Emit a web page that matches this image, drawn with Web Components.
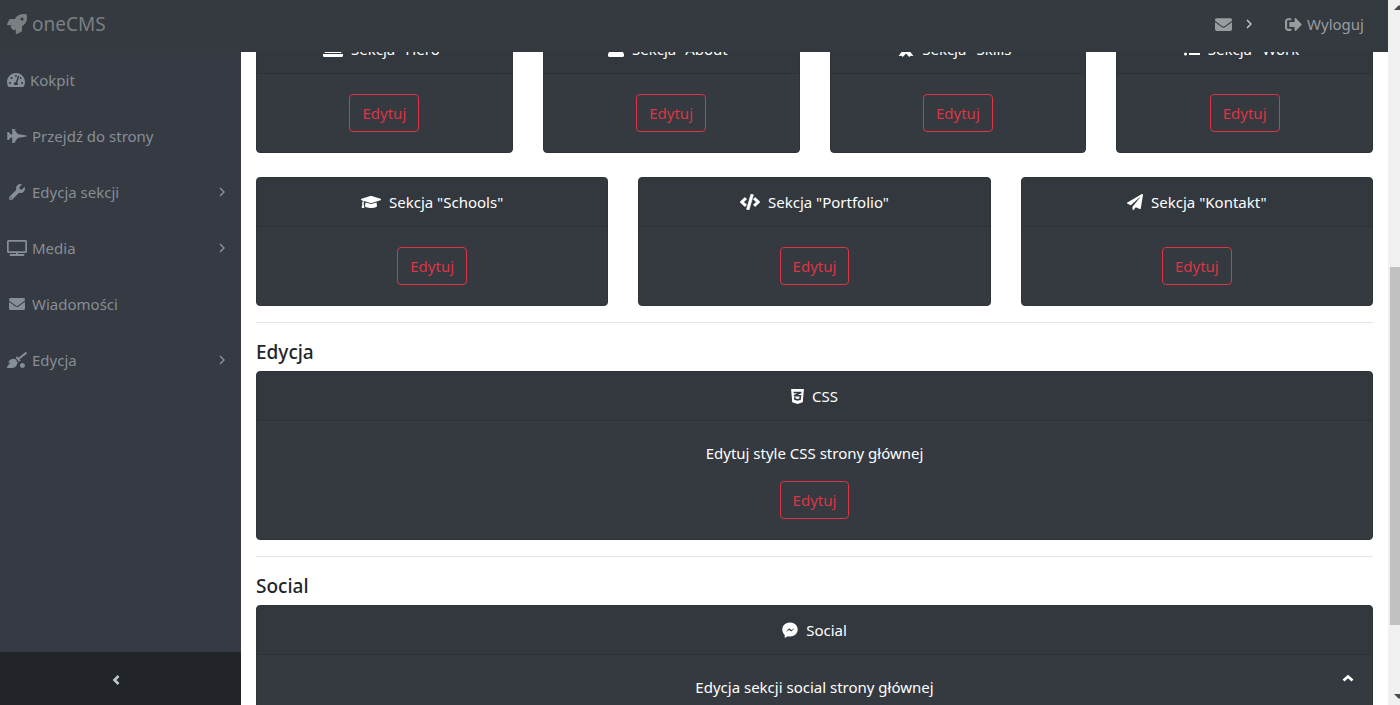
<!DOCTYPE html>
<html lang="pl">
<head>
<meta charset="utf-8">
<title>oneCMS</title>
<style>
  html, body { height: 100%; margin: 0; }
  body { overflow: hidden; background: #fff; color: #212529; font: 15px/24px "Noto Sans", "Open Sans", sans-serif; }
</style>
</head>
<body>
<cms-app>
  <cms-navbar slot="navbar"></cms-navbar>
  <cms-sidebar slot="sidebar">
    <cms-nav-item icon="gauge">Kokpit</cms-nav-item>
    <cms-nav-item icon="jet">Przejdź do strony</cms-nav-item>
    <cms-nav-item icon="wrench" more>Edycja sekcji</cms-nav-item>
    <cms-nav-item icon="screen" more>Media</cms-nav-item>
    <cms-nav-item icon="envelope">Wiadomości</cms-nav-item>
    <cms-nav-item icon="broom" more>Edycja</cms-nav-item>
  </cms-sidebar>
  <cms-row columns="4">
    <cms-card editable icon="hero" heading='Sekcja "Hero"'></cms-card>
    <cms-card editable icon="user" heading='Sekcja "About"'></cms-card>
    <cms-card editable icon="award" heading='Sekcja "Skills"'></cms-card>
    <cms-card editable icon="list" heading='Sekcja "Work"'></cms-card>
  </cms-row>
  <cms-row columns="3">
    <cms-card editable icon="cap" heading='Sekcja "Schools"'></cms-card>
    <cms-card editable icon="code" heading='Sekcja "Portfolio"'></cms-card>
    <cms-card editable icon="plane" heading='Sekcja "Kontakt"'></cms-card>
  </cms-row>
  <cms-section heading="Edycja">
    <cms-card editable icon="css" heading="CSS"><p>Edytuj style CSS strony głównej</p></cms-card>
  </cms-section>
  <cms-section heading="Social">
    <cms-card icon="messenger" heading="Social"><p>Edycja sekcji social strony głównej</p></cms-card>
  </cms-section>
</cms-app>

<script>
// name: [viewBox width, viewBox height, markup]
const ICONS = {
  rocket: [512, 512, '<path d="M505.12 19.09c-1.19-5.53-6.66-11-12.21-12.19C460.72 0 435.51 0 410.41 0 307.18 0 245.27 55.2 199.05 128H94.84c-16.35.02-35.56 11.88-42.89 26.48L2.52 253.3A28.4 28.4 0 0 0 0 264a24 24 0 0 0 24 24h103.82l-22.48 22.47c-11.36 11.36-13 32.26 0 45.25l50.91 50.91c11.15 11.18 32.15 13.15 45.27 0L224 384.16V488a24 24 0 0 0 24 24 28.56 28.56 0 0 0 10.71-2.52l98.73-49.39c14.63-7.3 26.5-26.5 26.5-42.86V312.8C456.54 266.48 512 204.39 512 101.7c.08-25.2.08-50.4-6.88-82.61ZM384 168a40 40 0 1 1 40-40 40 40 0 0 1-40 40Z"/>'],
  envelope: [512, 512, '<path d="M502.3 190.8c3.9-3.1 9.7-.2 9.7 4.7V400c0 26.5-21.5 48-48 48H48c-26.5 0-48-21.5-48-48V195.6c0-5 5.7-7.8 9.7-4.7 22.4 17.4 52.1 39.5 154.1 113.6 21.1 15.4 56.7 47.8 92.2 47.6 35.7.3 72-32.8 92.3-47.6 102-74.1 131.6-96.3 154-113.7zM256 320c23.2.4 56.6-29.2 73.4-41.4 132.7-96.3 142.8-104.7 173.4-128.7 5.8-4.5 9.2-11.5 9.2-18.9v-19c0-26.5-21.5-48-48-48H48c-26.5 0-48 21.5-48 48v19c0 7.4 3.4 14.3 9.2 18.9 30.6 23.9 40.7 32.4 173.4 128.7 16.8 12.2 50.2 41.8 73.4 41.4z"/>'],
  logout: [512, 512, '<path d="M497 273L329 441c-15 15-41 4.5-41-17v-96H152c-13.3 0-24-10.7-24-24v-96c0-13.3 10.7-24 24-24h136V88c0-21.4 25.9-32 41-17l168 168c9.3 9.4 9.3 24.6 0 34zM192 436v-40c0-6.6-5.4-12-12-12H96c-17.7 0-32-14.3-32-32V160c0-17.7 14.3-32 32-32h84c6.6 0 12-5.4 12-12V76c0-6.6-5.4-12-12-12H96c-53 0-96 43-96 96v192c0 53 43 96 96 96h84c6.6 0 12-5.4 12-12z"/>'],
  gauge: [576, 512, '<path d="M288 32C128.94 32 0 160.94 0 320c0 52.8 14.25 102.26 39.06 144.8 5.61 9.62 16.3 15.2 27.44 15.2h443c11.14 0 21.83-5.58 27.44-15.2C561.75 422.26 576 372.8 576 320c0-159.06-128.94-288-288-288zm0 64c14.71 0 26.58 10.13 30.32 23.65-1.11 2.26-2.64 4.23-3.45 6.67l-9.22 27.67c-5.13 3.49-10.97 6.01-17.64 6.01-17.67 0-32-14.33-32-32S270.33 96 288 96zM96 384c-17.67 0-32-14.33-32-32s14.33-32 32-32 32 14.33 32 32-14.33 32-32 32zm48-160c-17.67 0-32-14.33-32-32s14.33-32 32-32 32 14.33 32 32-14.33 32-32 32zm246.77-72.41l-61.33 184C343.13 347.33 352 364.54 352 384c0 11.72-3.38 22.55-8.88 32H232.88c-5.5-9.45-8.88-20.28-8.88-32 0-33.94 26.5-61.43 59.9-63.59l61.34-184.01c4.17-12.56 17.73-19.45 30.36-15.17 12.57 4.19 19.35 17.79 15.17 30.36zm14.66 57.2l15.52-46.55c3.47-1.29 7.13-2.23 11.05-2.23 17.67 0 32 14.33 32 32s-14.33 32-32 32c-11.38-.01-20.89-6.28-26.57-15.22zM480 384c-17.67 0-32-14.33-32-32s14.33-32 32-32 32 14.33 32 32-14.33 32-32 32z"/>'],
  jet: [640, 512, '<path d="M544 224l-128-16-48-16h-24L227.158 44h39.509C278.333 44 288 41.375 288 38s-9.667-6-21.333-6H152v12h16v164h-48l-66.667-80H18.667L8 138.667V208h8v16h48v2.666l-64 8v42.667l64 8V288H16v16H8v69.333L18.667 384h34.667L120 304h48v164h-16v12h114.667c11.667 0 21.333-2.625 21.333-6s-9.667-6-21.333-6h-39.509L344 320h24l48-16 128-16c96-21.333 96-26.583 96-32 0-5.417 0-10.667-96-32z"/>'],
  wrench: [512, 512, '<path d="M507.73 109.1c-2.24-9.03-13.54-12.09-20.12-5.51l-74.36 74.36-67.88-11.31-11.31-67.88 74.36-74.36c6.62-6.62 3.43-17.9-5.66-20.16-47.38-11.74-99.55.91-136.58 37.93-39.64 39.64-50.55 97.1-34.05 147.2L18.74 402.76c-24.99 24.99-24.99 65.51 0 90.5 24.99 24.99 65.51 24.99 90.5 0l213.21-213.21c50.12 16.71 107.47 5.68 147.37-34.22 37.07-37.07 49.7-89.32 37.91-136.73zM64 472c-13.25 0-24-10.75-24-24 0-13.26 10.75-24 24-24s24 10.74 24 24c0 13.25-10.75 24-24 24z"/>'],
  screen: [20, 16, '<path fill-rule="evenodd" d="M1.5 0h17A1.5 1.5 0 0 1 20 1.5v10a1.5 1.5 0 0 1-1.5 1.5h-17A1.5 1.5 0 0 1 0 11.5v-10A1.5 1.5 0 0 1 1.5 0zM1.7 1.7v9.600h16.600V1.700zM9 13h2v1h5.500a.8.8 0 0 1 0 2h-13a.8.8 0 0 1 0-2H9z"/>'],
  broom: [640, 512, '<path d="M256.5 216.8L343.2 326s-16.6 102.4-76.6 150.1C206.7 523.8 0 510.2 0 510.2s3.8-23.1 11-55.4l94.6-112.2c4-4.7-.9-11.6-6.6-9.5l-60.4 22.1c14.4-41.7 32.7-80 54.6-97.5 59.9-47.8 163.3-40.9 163.3-40.9zm238 135c-44 0-79.8 35.8-79.8 79.9 0 44.1 35.7 79.9 79.8 79.9 44.1 0 79.8-35.8 79.8-79.9 0-44.2-35.8-79.9-79.8-79.9zM636.5 31L616.7 6c-5.5-6.9-15.5-8-22.4-2.6L361.8 181.3l-34.1-43c-5.1-6.4-15.1-5.2-18.6 2.2l-25.3 54.6 86.7 109.2 58.8-12.4c8-1.7 11.4-11.2 6.3-17.6l-34.1-42.9L634 53.5c6.9-5.5 8-15.6 2.5-22.5z"/>'],
  hero: [20, 16, '<path d="M3 1h14v9H3zM2 10.500h16l.5 1.500H1.500zM0 13h20v1.500a1.500 1.500 0 0 1-1.500 1.500h-17A1.500 1.500 0 0 1 0 14.500z"/>'],
  user: [512, 512, '<path d="M256 288c79.5 0 144-64.5 144-144S335.5 0 256 0 112 64.5 112 144s64.5 144 144 144zm128 32h-55.1c-22.2 10.2-46.9 16-72.9 16s-50.6-5.8-72.9-16H128C57.3 320 0 377.3 0 448v16c0 26.5 21.5 48 48 48h416c26.5 0 48-21.5 48-48v-16c0-70.7-57.3-128-128-128z"/>'],
  award: [16, 16, '<path d="M8 0a5.500 5.500 0 0 1 5.500 5.500c0 1.800-.8 3.300-2 4.400L15.500 15l-2.800-.3-1.500 1.300L8 12.500 4.800 16l-1.500-1.300-2.800.3 4-5.100a5.500 5.500 0 0 1-2-4.400A5.500 5.500 0 0 1 8 0z"/>'],
  list: [16, 16, '<circle cx="1.5" cy="3" r="1.5"/><circle cx="1.5" cy="8" r="1.5"/><circle cx="1.5" cy="13" r="1.5"/><path d="M5 2h11v2H5zM5 7h11v2H5zM5 12h11v2H5z"/>'],
  cap: [640, 512, '<path d="M622.34 153.2L343.4 67.5c-15.2-4.67-31.6-4.67-46.79 0L17.66 153.2c-23.54 7.23-23.54 38.36 0 45.59l48.63 14.94c-10.67 13.19-17.23 29.28-17.88 46.9C38.78 266.15 32 276.11 32 288c0 10.78 5.68 19.85 13.86 25.65L20.33 428.53C18.11 438.52 25.71 448 35.94 448h56.11c10.24 0 17.84-9.48 15.62-19.47L82.14 313.65C90.32 307.85 96 298.78 96 288c0-11.57-6.47-21.25-15.66-26.87.76-15.02 8.44-28.3 20.69-36.72L296.6 284.5c9.06 2.78 26.44 6.25 46.79 0l278.95-85.7c23.55-7.24 23.55-38.36 0-45.6zM352.79 315.09c-28.53 8.76-52.84 3.92-65.59 0l-145.02-44.55L128 384c0 35.35 85.96 64 192 64s192-28.65 192-64l-14.18-113.47-145.03 44.56z"/>'],
  code: [640, 512, '<path stroke="currentColor" stroke-width="14" d="M278.9 511.5l-61-17.7c-6.4-1.8-10-8.5-8.2-14.9L346.2 8.7c1.8-6.4 8.5-10 14.9-8.2l61 17.7c6.4 1.8 10 8.5 8.2 14.9L293.8 503.3c-1.9 6.4-8.5 10.1-14.9 8.2zm-114-112.2l43.5-46.4c4.6-4.9 4.3-12.7-.8-17.2L117 256l90.6-79.7c5.1-4.5 5.5-12.3.8-17.2l-43.5-46.4c-4.5-4.8-12.1-5.1-17-.5L3.8 247.2c-5.1 4.7-5.1 12.8 0 17.5l144.1 135.1c4.9 4.6 12.5 4.4 17-.5zm327.2.6l144.1-135.1c5.1-4.7 5.1-12.8 0-17.5L492.1 112.1c-4.8-4.5-12.4-4.3-17 .5L431.6 159c-4.6 4.9-4.3 12.7.8 17.2L523 256l-90.6 79.7c-5.1 4.5-5.5 12.3-.8 17.2l43.5 46.4c4.5 4.9 12.1 5.1 17 .6z"/>'],
  plane: [512, 512, '<path d="M476 3.2L12.5 270.6c-18.1 10.4-15.8 35.6 2.2 43.2L121 358.4l287.3-253.2c5.5-4.9 13.3 2.6 8.6 8.3L176 407v80.5c0 23.6 28.5 32.9 42.5 15.8L282 426l124.6 52.2c14.2 6 30.4-2.9 33-18.2l72-432C515 7.8 493.3-6.8 476 3.2z"/>'],
  css: [384, 448, '<path transform="translate(0 -32)" d="M0 32l34.9 395.8L192 480l157.1-52.2L384 32H0zm313.1 80l-4.8 47.3L193 208.6l-.3.1h111.5l-12.8 146.6-98.2 28.7-98.8-29.2-6.4-73.9h48.9l3.2 38.3 52.6 13.3 54.7-15.4 3.7-61.6-166.3-.5v-.1l-.2.1-3.6-46.3L193.1 162l6.5-2.7H76.7L70.9 112h242.2z"/>'],
  messenger: [16, 16, '<path fill-rule="evenodd" d="M8 .5c4.4 0 7.7 3 7.7 7s-3.3 7-7.7 7c-.8 0-1.5-.1-2.2-.3L3.2 15.700c-.3.1-.5 0-.5-.3V12.900C1.200 11.600.3 9.700.3 7.500c0-4 3.300-7 7.700-7zM3.800 9.900 7.200 6.200l2 1.700 3.500-1.800L9.200 9.600 7.100 8z"/>'],
  right: [6, 10, '<path d="M1 1l4 4-4 4" fill="none" stroke="currentColor" stroke-width="1.5"/>'],
  left: [8, 10, '<path d="M6.500 1L2.500 5l4 4" fill="none" stroke="currentColor" stroke-width="2.6"/>'],
  up: [12, 8, '<path d="M1.500 6.500L6 2.500l4.500 4" fill="none" stroke="currentColor" stroke-width="2.8"/>']
};

const define = (name, html, setup) => {
  const template = document.createElement('template');
  template.innerHTML = html;
  customElements.define(name, class extends HTMLElement {
    connectedCallback() {
      if (this.shadowRoot) return;
      this.attachShadow({ mode: 'open' }).append(template.content.cloneNode(true));
      if (setup) setup(this, this.shadowRoot);
    }
  });
};

// size = height in pixels; the width follows the icon's own proportions
define('cms-icon', `
  <style>:host{display:inline-flex;flex:none} svg{display:block;fill:currentColor}</style>
  <svg aria-hidden="true"></svg>`, (el, root) => {
  const [w, h, markup] = ICONS[el.getAttribute('name')];
  const size = Number(el.getAttribute('size') || 16);
  const svg = root.querySelector('svg');
  svg.setAttribute('viewBox', `0 0 ${w} ${h}`);
  svg.setAttribute('height', size);
  svg.setAttribute('width', Math.round(size * w / h));
  svg.innerHTML = markup;
});

define('cms-scrollbar', `
  <style>
    :host{display:grid;grid-template-rows:17fr 250fr 358fr 63fr 17fr;background:#f0f0f0;overflow:hidden}
    .thumb{grid-row:3;background:#c1c1c1;margin-left:2px}
    svg{display:block;fill:#494c51}
    .down{grid-row:5}
  </style>
  <svg width="12" height="17"><path d="M6 10l5-5 5 5z"/></svg>
  <div class="thumb"></div>
  <svg class="down" width="12" height="17"><path d="M6 6l5 5 5-5z"/></svg>`);

define('cms-navbar', `
  <style>
    :host{display:block;background:#343a40}
    nav{display:flex;align-items:center;height:52px;padding:0 24px 4px 7px;box-sizing:border-box}
    a{display:flex;align-items:center;text-decoration:none;color:#999c9f;gap:5px}
    .brand{color:#7b7f82;font-size:19px;margin-right:auto}
    .mail{gap:14px;color:#999c9f;margin-right:33px}
    .mail cms-icon + cms-icon{color:#c3c6ca}
  </style>
  <nav>
    <a class="brand" href="#"><cms-icon name="rocket" size="20"></cms-icon>oneCMS</a>
    <a class="mail" href="#" aria-label="Wiadomości"><cms-icon name="envelope" size="17"></cms-icon><cms-icon name="right" size="10"></cms-icon></a>
    <a href="#"><cms-icon name="logout" size="17"></cms-icon>Wyloguj</a>
  </nav>`);

define('cms-nav-item', `
  <style>
    :host{display:block}
    a{display:flex;align-items:center;height:56px;padding:0 16px 0 7px;gap:5px;color:#868e96;text-decoration:none}
    .icon{display:flex;justify-content:center;min-width:20px}
    .icon.own{min-width:0}
    .more{margin-left:auto}
  </style>
  <a href="#"><span class="icon"></span><slot></slot></a>`, (el, root) => {
  const name = el.getAttribute('icon');
  const box = root.querySelector('.icon');
  box.classList.toggle('own', name === 'gauge');
  box.innerHTML = `<cms-icon name="${name}"></cms-icon>`;
  if (el.hasAttribute('more'))
    root.querySelector('a').insertAdjacentHTML('beforeend', '<cms-icon class="more" name="right" size="10"></cms-icon>');
});

define('cms-sidebar', `
  <style>
    :host{display:flex;flex-direction:column;background:#363a42}
    nav{flex:1}
    button{display:flex;align-items:center;justify-content:center;height:53px;border:0;padding:2px 9px 0 0;background:#212529;color:#bfc5cf}
  </style>
  <nav><slot></slot></nav>
  <button type="button" aria-label="Zwiń menu"><cms-icon name="left" size="10"></cms-icon></button>`);

define('cms-row', `
  <style>:host{display:block;margin-bottom:24px} div{display:grid;gap:30px}
  :host(:nth-of-type(2)){margin-bottom:0}</style>
  <div><slot></slot></div>`, (el, root) => {
  root.querySelector('div').style.gridTemplateColumns = `repeat(${el.getAttribute('columns')}, 1fr)`;
});

define('cms-section', `
  <style>
    :host{display:block}
    hr{margin:16px 0;border:0;border-top:1px solid #e5e5e5}
    h5{margin:0 0 6px;font-size:19px;line-height:26px;font-weight:500}
  </style>
  <hr><h5></h5><slot></slot>`, (el, root) => {
  root.querySelector('h5').textContent = el.getAttribute('heading');
});

define('cms-card', `
  <style>
    :host{display:block;box-sizing:border-box;background:#343a40;border:1px solid #2f3439;border-radius:4px;color:#fff;text-align:center;overflow:hidden}
    header{display:flex;align-items:center;justify-content:center;gap:8px;padding:12px 20px;background:#32383e;border-bottom:1px solid #2d3237}
    .body{padding:20px}
    ::slotted(p){margin:0 0 16px}
    button{display:block;margin:0 auto;padding:6px 12px;font:inherit;line-height:24px;color:#dc3545;background:none;border:1px solid #dc3545;border-radius:4px}
  </style>
  <header></header>
  <div class="body"><slot></slot></div>`, (el, root) => {
  const name = el.getAttribute('icon');
  const size = name === 'css' ? 15 : 16;
  const header = root.querySelector('header');
  header.innerHTML = `<cms-icon name="${name}" size="${size}"></cms-icon><span></span>`;
  header.querySelector('span').textContent = el.getAttribute('heading');
  if (el.hasAttribute('editable'))
    root.querySelector('.body').insertAdjacentHTML('beforeend', '<button type="button">Edytuj</button>');
});

define('cms-app', `
  <style>
    :host{display:grid;grid-template:auto minmax(0,1fr) / 241px minmax(0,1fr) 12px;height:100vh}
    ::slotted([slot=navbar]){grid-area:1 / 1 / 2 / 3}
    ::slotted([slot=sidebar]){grid-area:2 / 1 / 3 / 2}
    main{grid-area:2 / 2 / 3 / 3;overflow:hidden;padding:0 15px}
    cms-scrollbar{grid-area:1 / 3 / 3 / 4}
    .top{position:fixed;right:46px;bottom:20px;padding:0;border:0;background:none;color:#fff}
  </style>
  <slot name="navbar"></slot>
  <slot name="sidebar"></slot>
  <main><slot></slot></main>
  <cms-scrollbar></cms-scrollbar>
  <button class="top" type="button" aria-label="Do góry"><cms-icon name="up" size="8"></cms-icon></button>`, (el, root) => {
  // the page opens part-way down, as its scrollbar shows
  requestAnimationFrame(() => { root.querySelector('main').scrollTop = 28; });
});
</script>
</body>
</html>
